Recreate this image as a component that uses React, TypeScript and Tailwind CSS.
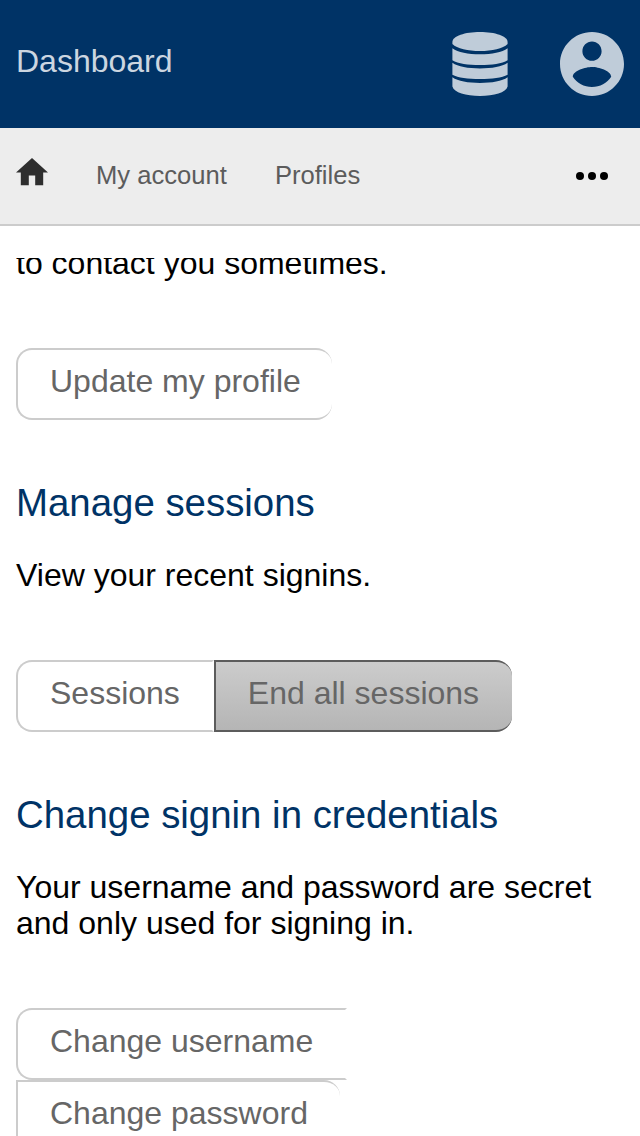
import type { ReactNode } from 'react';

function DatabaseIcon() {
  return (
    <svg viewBox="0 0 56 64" className="h-16 w-14" fill="currentColor" aria-hidden="true">
      <path d="M.4 10C.4 4 13 0 28 0s27.600 4 27.600 10v2C51 16.800 40 19 28 19S5 16.800 .4 12z" />
      <path d="M.4 16.200C6 20.400 16 22.300 28 22.300S50 20.400 55.600 16.200v12C50 31.500 40 33.100 28 33.100S6 31.500 .4 28.200z" />
      <path d="M.4 30.700C6 34.700 16 36.400 28 36.400S50 34.700 55.600 30.700v12.100C50 45.700 40 47.100 28 47.100S6 45.700 .4 42.800z" />
      <path d="M.4 45.200C6 49.200 16 50.900 28 50.900S50 49.200 55.600 45.200v9.300C54 60.500 42 64 28 64S2 60.500 .4 54.500z" />
    </svg>
  );
}

function AccountIcon() {
  return (
    <svg viewBox="2 2 20 20" className="size-16" fill="currentColor" aria-hidden="true">
      <path d="M12 2C6.48 2 2 6.48 2 12s4.480 10 10 10 10-4.480 10-10S17.520 2 12 2zm0 3c1.660 0 3 1.340 3 3s-1.340 3-3 3-3-1.340-3-3 1.340-3 3-3zm0 14.200c-2.500 0-4.710-1.280-6-3.220.03-1.990 4-3.080 6-3.080 1.990 0 5.970 1.090 6 3.080-1.290 1.940-3.500 3.220-6 3.220z" />
    </svg>
  );
}

function HomeIcon() {
  return (
    <svg viewBox="2 3 20 17" className="h-[27.2px] w-8" fill="currentColor" aria-hidden="true">
      <path d="M10 20v-6h4v6h5v-8h3L12 3 2 12h3v8z" />
    </svg>
  );
}

function MoreIcon() {
  return (
    <svg viewBox="0 0 32 8" className="h-2 w-8" fill="currentColor" aria-hidden="true">
      <circle cx="4" cy="4" r="4" />
      <circle cx="16" cy="4" r="4" />
      <circle cx="28" cy="4" r="4" />
    </svg>
  );
}

function ActionButton({ children, className }: { children: ReactNode; className: string }) {
  return (
    <button
      type="button"
      className={`h-[72px] shrink-0 border-2 px-8 pb-1.5 text-[32px] leading-9 whitespace-nowrap text-[#666] ${className}`}
    >
      {children}
    </button>
  );
}

function SectionTitle({ children }: { children: ReactNode }) {
  return <h2 className="text-[38.4px] leading-[44px] text-[#003366]">{children}</h2>;
}

export default function App() {
  return (
    <div className="flex h-[1136px] w-[640px] flex-col overflow-hidden bg-white font-['Liberation_Sans',Arial,sans-serif] text-black">
      <header className="flex h-32 shrink-0 items-center justify-between bg-[#003366] px-4 text-[#bfccd9]">
        <h1 className="pb-1.5 text-[32px] leading-9 text-[#ccd6e0]">Dashboard</h1>
        <div className="flex items-center gap-[52px]">
          <DatabaseIcon />
          <AccountIcon />
        </div>
      </header>

      <nav className="flex h-[98px] shrink-0 items-center border-b-2 border-[#ccc] bg-[#ededed] pr-8 pl-4 text-[25.6px] leading-[30px] text-[#5c5c5c]">
        <a className="mr-12 pb-2 text-[#2e2e2e]" aria-label="Home">
          <HomeIcon />
        </a>
        <a className="mr-12 pb-0.5">My account</a>
        <a className="pb-0.5">Profiles</a>
        <button type="button" className="ml-auto text-black" aria-label="More">
          <MoreIcon />
        </button>
      </nav>

      <main className="mt-8 min-h-0 flex-1 overflow-hidden px-4 text-[32px] leading-9">
        <p className="-mt-[13px]">to contact you sometimes.</p>
        <div className="mt-[67px] flex">
          <ActionButton className="w-[316px] rounded-2xl border-r-0 border-[#ccc]">Update my profile</ActionButton>
        </div>

        <section className="mt-[61px]">
          <SectionTitle>Manage sessions</SectionTitle>
          <p className="mt-8">View your recent signins.</p>
          <div className="mt-[67px] flex">
            <ActionButton className="rounded-l-2xl border-y-[#ccc] border-r-transparent border-l-[#ccc]">
              Sessions
            </ActionButton>
            <ActionButton className="w-[298px] rounded-r-2xl border-r-0 border-[#5c5c5c] bg-linear-to-b from-[#ccc] to-[#b5b5b5] text-left">
              End all sessions
            </ActionButton>
          </div>
        </section>

        <section className="mt-[61px]">
          <SectionTitle>Change signin in credentials</SectionTitle>
          <p className="mt-8">Your username and password are secret and only used for signing in.</p>
          <div className="mt-[67px] flex flex-col items-start">
            <ActionButton className="rounded-l-2xl border-y-[#ccc] border-r-transparent border-l-[#ccc]">
              Change username
            </ActionButton>
            <ActionButton className="rounded-r-2xl border-r-0 border-[#ccc]">Change password</ActionButton>
          </div>
        </section>
      </main>
    </div>
  );
}
